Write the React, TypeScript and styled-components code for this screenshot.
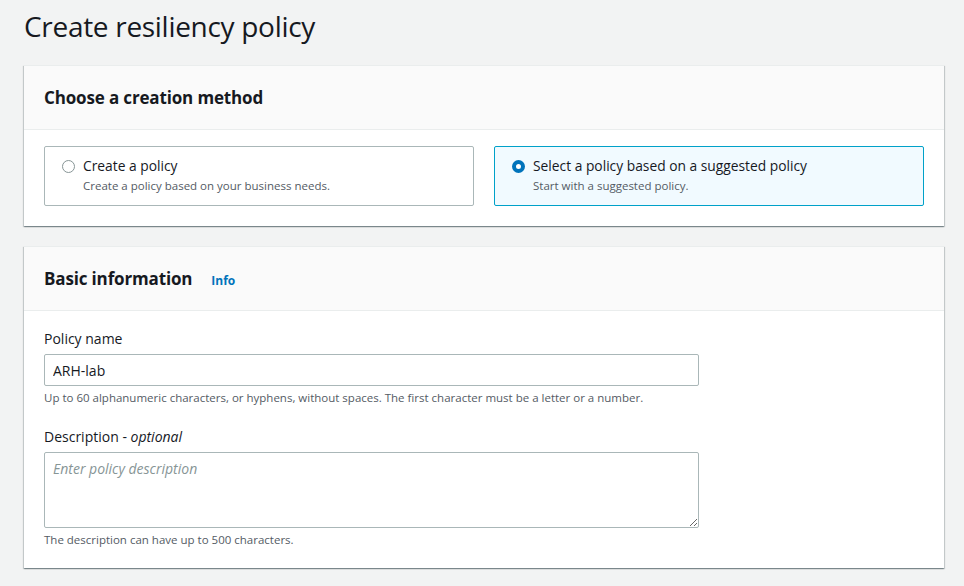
import React from 'react'
import styled, { createGlobalStyle } from 'styled-components'

const GlobalStyle = createGlobalStyle`
  body {
    margin: 0;
    background: #f2f3f3;
    font-family: "Open Sans", "Liberation Sans", sans-serif;
    color: #16191f;
  }
`;

const Page = styled.div`
  padding: 8px 20px 18px 24px;
  display: flex;
  flex-direction: column;
  gap: 20px;
`;

const PageTitle = styled.h1`
  margin: 0 0 1px 0;
  font-size: 28px;
  font-weight: 400;
  line-height: 36px;
  color: #16191f;
  letter-spacing: -0.3px;
`;

const Card = styled.section`
  background: #ffffff;
  border-top: 1px solid #eaeded;
  box-shadow: 0 1px 1px 0 rgba(0, 28, 36, 0.3), 1px 1px 1px 0 rgba(0, 28, 36, 0.15),
    -1px 1px 1px 0 rgba(0, 28, 36, 0.15);
`;

const CardHeader = styled.div`
  background: #fafafa;
  border-bottom: 1px solid #eaeded;
  height: 63px;
  padding: 0 20px;
  display: flex;
  align-items: center;
  gap: 19px;
`;

const CardTitle = styled.h2`
  margin: 0;
  font-size: 17px;
  font-weight: 700;
  color: #16191f;
  letter-spacing: -0.15px;
`;

const InfoLink = styled.a`
  font-size: 12px;
  font-weight: 700;
  color: #0073bb;
  text-decoration: none;
  margin-top: 3px;
`;

const CardBody = styled.div<{ $top: number }>`
  padding: ${p => p.$top}px 20px 20px 20px;
`;

const TileGrid = styled.div`
  display: grid;
  grid-template-columns: 1fr 1fr;
  gap: 20px;
`;

const Tile = styled.label<{ $selected?: boolean }>`
  display: flex;
  gap: 8px;
  height: 60px;
  box-sizing: border-box;
  padding: 9px 17px 10px;
  border: 1px solid ${p => (p.$selected ? '#00a1c9' : '#aab7b8')};
  background: ${p => (p.$selected ? '#f1faff' : '#ffffff')};
  border-radius: 2px;
`;

const Radio = styled.span<{ $checked?: boolean }>`
  flex: none;
  width: 13px;
  height: 13px;
  margin-top: 4px;
  box-sizing: border-box;
  border-radius: 50%;
  border: ${p => (p.$checked ? '4px solid #0073bb' : '1.5px solid #879596')};
  background: #ffffff;
`;

const TileText = styled.div`
  display: flex;
  flex-direction: column;
`;

const TileTitle = styled.span`
  font-size: 13.8px;
  line-height: 20px;
  color: #16191f;
`;

const TileDesc = styled.span`
  font-size: 11.5px;
  line-height: 16px;
  color: #545b64;
  margin-top: 2px;
`;

const Field = styled.div`
  display: flex;
  flex-direction: column;
  width: 655px;
  margin-bottom: 21px;
  &:last-child {
    margin-bottom: 0;
  }
`;

const Label = styled.label`
  font-size: 14px;
  line-height: 20px;
  color: #16191f;
  margin-bottom: 5px;
  em {
    font-style: italic;
  }
`;

const TextInput = styled.input`
  height: 32px;
  box-sizing: border-box;
  border: 1px solid #aab7b8;
  border-radius: 2px;
  padding: 4px 8px;
  font-family: inherit;
  font-size: 14px;
  color: #16191f;
  outline: none;
`;

const TextArea = styled.textarea`
  height: 76px;
  box-sizing: border-box;
  border: 1px solid #aab7b8;
  border-radius: 2px;
  padding: 6px 8px;
  font-family: inherit;
  font-size: 14px;
  color: #16191f;
  outline: none;
  resize: vertical;
  &::placeholder {
    color: #879596;
    font-style: italic;
  }
`;

const Hint = styled.div`
  font-size: 11.5px;
  line-height: 16px;
  color: #545b64;
  margin-top: 4px;
`;

const options = [
  { title: 'Create a policy', desc: 'Create a policy based on your business needs.', selected: false },
  { title: 'Select a policy based on a suggested policy', desc: 'Start with a suggested policy.', selected: true },
];

const App: React.FC = () => {
  return (
    <Page>
      <GlobalStyle />
      <PageTitle>Create resiliency policy</PageTitle>

      <Card>
        <CardHeader>
          <CardTitle>Choose a creation method</CardTitle>
        </CardHeader>
        <CardBody $top={16}>
          <TileGrid>
            {options.map(o => (
              <Tile key={o.title} $selected={o.selected}>
                <Radio $checked={o.selected} />
                <TileText>
                  <TileTitle>{o.title}</TileTitle>
                  <TileDesc>{o.desc}</TileDesc>
                </TileText>
              </Tile>
            ))}
          </TileGrid>
        </CardBody>
      </Card>

      <Card>
        <CardHeader>
          <CardTitle>Basic information</CardTitle>
          <InfoLink href="#">Info</InfoLink>
        </CardHeader>
        <CardBody $top={18}>
          <Field>
            <Label>Policy name</Label>
            <TextInput defaultValue="ARH-lab" />
            <Hint>
              Up to 60 alphanumeric characters, or hyphens, without spaces. The first character must be a letter or a number.
            </Hint>
          </Field>
          <Field>
            <Label>
              Description - <em>optional</em>
            </Label>
            <TextArea placeholder="Enter policy description" />
            <Hint>The description can have up to 500 characters.</Hint>
          </Field>
        </CardBody>
      </Card>
    </Page>
  );
};

export default App;
